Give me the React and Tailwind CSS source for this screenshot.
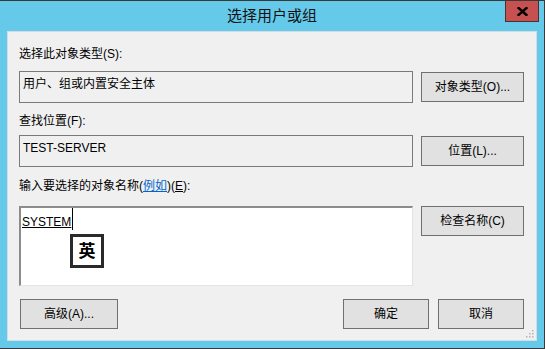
import React from "react";

const font = { fontFamily: '"Liberation Sans", "Noto Sans CJK SC", sans-serif' };

function Btn({ children, className = "" }) {
  return (
    <div
      className={
        "h-[30px] flex items-center justify-center bg-[#e1e1e1] border border-[#707070] text-[12px] leading-4 text-black " +
        className
      }
    >
      {children}
    </div>
  );
}

export default function App() {
  return (
    <div
      className="relative w-[545px] h-[349px] bg-[#65c9ea] border-t border-r border-b border-[#3a3a3a] flex flex-col overflow-hidden"
      style={font}
    >
      {/* title bar */}
      <div className="h-[30px] flex items-center justify-center text-[15px] text-[#111] leading-5 pb-[1px]">
        选择用户或组
      </div>
      <div className="absolute top-[-1px] right-[5px] w-[34px] h-[22px] bg-[#c75050] border border-[#4a3030] flex items-center justify-center">
        <svg width="11" height="9" viewBox="0 0 11 9">
          <path d="M1.5 1 L9.5 8 M9.5 1 L1.5 8" stroke="#000" strokeWidth="2.4" strokeLinecap="square" />
        </svg>
      </div>

      {/* client panel */}
      <div className="relative ml-[7px] w-[530px] h-[310px] bg-[#f0f0f0] border border-[#d4dde2] flex flex-col pl-[11px] pr-[12px] pt-[14px]">
        <div className="text-[12px] leading-4 text-black">选择此对象类型(S):</div>
        <div className="mt-[9px] flex items-center gap-[8px]">
          <div className="flex-1 h-[32px] border border-[#7a7a7a] bg-[#f0f0f0] pl-[3px] pt-[4px] text-[12px] leading-4 text-black">
            用户、组或内置安全主体
          </div>
          <Btn className="w-[103px]">对象类型(O)...</Btn>
        </div>

        <div className="mt-[10px] text-[12px] leading-4 text-black">查找位置(F):</div>
        <div className="mt-[6px] flex items-center gap-[8px]">
          <div className="flex-1 h-[32px] border border-[#7a7a7a] bg-[#f0f0f0] pl-[3px] pt-[4px] text-[12px] leading-4 text-black">
            TEST-SERVER
          </div>
          <Btn className="w-[103px]">位置(L)...</Btn>
        </div>

        <div className="mt-[11px] text-[12px] leading-4 text-black">
          输入要选择的对象名称(
          <span className="text-[#0066cc] underline">例如</span>)(<span className="underline">E</span>):
        </div>
        <div className="mt-[12px] flex items-start gap-[8px]">
          <div className="relative flex-1 h-[80px] bg-white border-t-2 border-l-2 border-t-[#8c8c8c] border-l-[#8c8c8c] border-b border-r border-b-[#e3e3e3] border-r-[#e3e3e3] pl-[1px] flex items-start">
            <span className="mt-[6px] text-[12px] leading-4 text-black underline underline-offset-[1px]">SYSTEM</span>
            <span className="w-[1px] h-[22px] bg-black ml-[1px]" />
            <div className="absolute left-[49px] top-[26px] w-[34px] h-[34px] border-[3px] border-[#2a2a2a] bg-white flex items-center justify-center text-[17px] font-bold leading-none text-black">
              英
            </div>
          </div>
          <Btn className="w-[103px]">检查名称(C)</Btn>
        </div>

        <div className="mt-[13px] flex items-center">
          <Btn className="w-[98px] ml-[1px]">高级(A)...</Btn>
          <div className="flex-1" />
          <Btn className="w-[86px]">确定</Btn>
          <Btn className="w-[86px] ml-[9px]">取消</Btn>
        </div>

        <svg className="absolute right-[2px] bottom-[2px]" width="8" height="8" viewBox="0 0 8 8">
          <rect x="6" y="0" width="1.5" height="1.5" fill="#b5b5b5" />
          <rect x="3" y="3" width="1.5" height="1.5" fill="#b5b5b5" />
          <rect x="6" y="3" width="1.5" height="1.5" fill="#b5b5b5" />
          <rect x="0" y="6" width="1.5" height="1.5" fill="#b5b5b5" />
          <rect x="3" y="6" width="1.5" height="1.5" fill="#b5b5b5" />
          <rect x="6" y="6" width="1.5" height="1.5" fill="#b5b5b5" />
        </svg>
      </div>
    </div>
  );
}
